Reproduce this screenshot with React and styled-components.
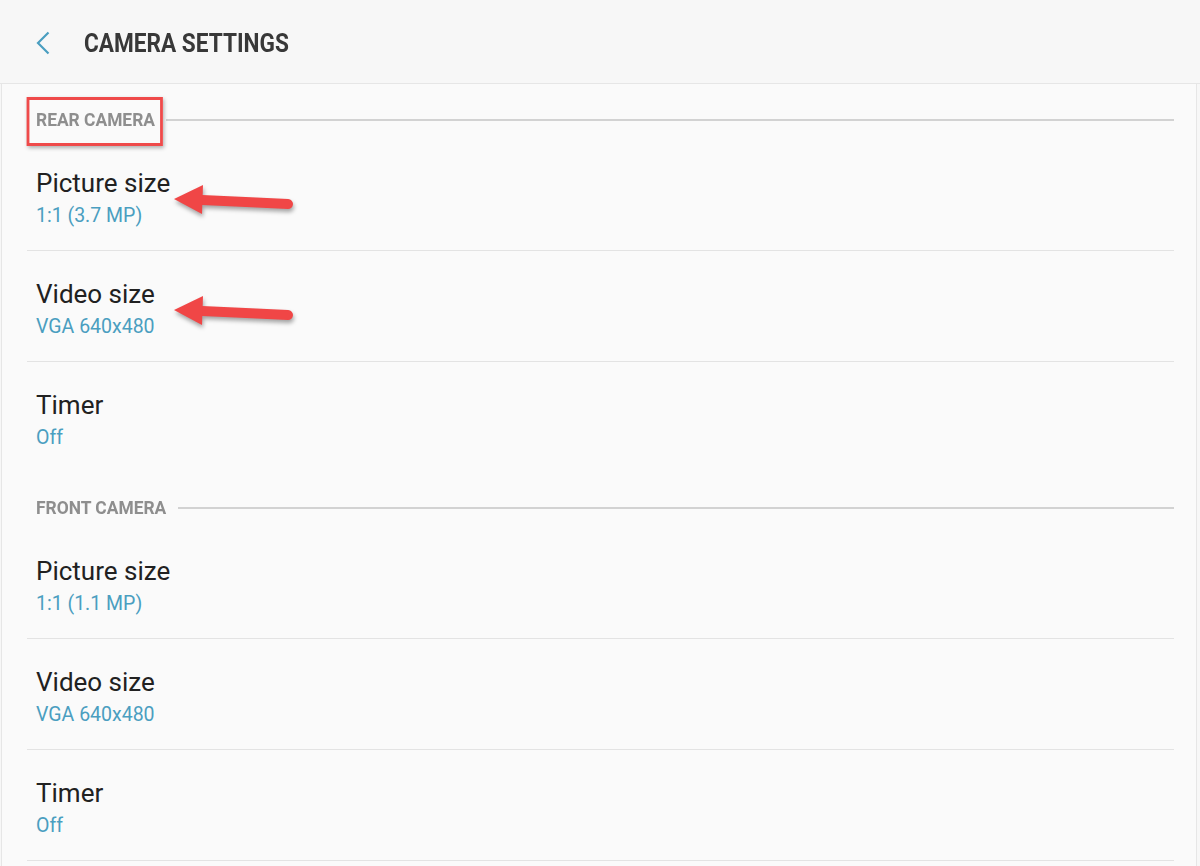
import React from "react";
import styled, { createGlobalStyle } from "styled-components";

const Global = createGlobalStyle`
  html, body { margin: 0; padding: 0; background: #f7f7f7; }
  body { font-family: Roboto, "Noto Sans", Arial, sans-serif; }
  * { box-sizing: border-box; }
`;

const Page = styled.div`
  width: 1200px;
  height: 866px;
  overflow: hidden;
  display: flex;
  flex-direction: column;
  background: #f7f7f7;
`;

const TopBar = styled.header`
  height: 84px;
  flex: none;
  display: flex;
  align-items: center;
  padding: 3px 0 0 33px;
  gap: 31px;
  border-bottom: 1px solid #e6e6e6;
`;

const BackButton = styled.button`
  width: 20px;
  height: 26px;
  padding: 0;
  border: 0;
  background: none;
  display: flex;
  align-items: center;
  justify-content: center;
  margin-top: -1px;
`;

const Title = styled.h1`
  margin: 0;
  font-size: 26px;
  font-weight: 700;
  color: #383838;
  transform: scaleX(0.87);
  transform-origin: left center;
  white-space: nowrap;
`;

const Panel = styled.main`
  flex: 1;
  margin: 0 3px 0 1px;
  background: #fafafa;
  border-left: 1px solid #e6e6e6;
  border-right: 1px solid #e6e6e6;
  padding: 0 22px 0 25px;
  display: flex;
  flex-direction: column;
`;

const SectionHead = styled.div`
  height: 56px;
  flex: none;
  display: flex;
  align-items: center;
  padding: ${(p) => (p.first ? 15 : 16)}px 0 0 9px;
  gap: 8px;
`;

const SectionLabel = styled.span`
  position: relative;
  font-size: 18.5px;
  font-weight: 700;
  color: #8e8e8e;
  line-height: 20px;
  white-space: nowrap;
  display: inline-block;
  transform: scaleX(0.94);
  transform-origin: left center;
  margin-right: -5px;
`;

const Highlight = styled.span`
  position: absolute;
  left: -10px;
  top: -13px;
  right: -8px;
  bottom: -16px;
  border: 3px solid #ef4a4a;
  box-shadow: 1px 2px 4px rgba(0, 0, 0, 0.3);
  pointer-events: none;
`;

const SectionLine = styled.div`
  flex: 1;
  height: 2px;
  background: #d2d2d2;
`;

const Row = styled.div`
  position: relative;
  height: ${(p) => (p.last ? 110 : 111)}px;
  padding: 28px 0 0 9px;
  border-bottom: ${(p) => (p.last ? "none" : "1px solid #e3e3e3")};
  flex: none;
`;

const RowTitle = styled.div`
  font-size: 26px;
  line-height: 30px;
  color: #212121;
`;

const RowValue = styled.div`
  margin-top: 6px;
  font-size: 19.5px;
  line-height: 24px;
  color: #4a9ec0;
`;

const ArrowSvg = styled.svg`
  position: absolute;
  left: 143px;
  top: 40px;
  overflow: visible;
  filter: drop-shadow(1px 3px 2px rgba(0, 0, 0, 0.35));
`;

function Arrow() {
  return (
    <ArrowSvg width="130" height="45" viewBox="0 0 130 45">
      <line x1="32" y1="20" x2="118" y2="24" stroke="#f04646" strokeWidth="10" strokeLinecap="round" />
      <polygon points="4,19 33,5 32,34" fill="#f04646" />
    </ArrowSvg>
  );
}

const sections = [
  {
    label: "REAR CAMERA",
    highlight: true,
    rows: [
      { title: "Picture size", value: "1:1 (3.7 MP)", arrow: true },
      { title: "Video size", value: "VGA 640x480", arrow: true },
      { title: "Timer", value: "Off", last: true },
    ],
  },
  {
    label: "FRONT CAMERA",
    rows: [
      { title: "Picture size", value: "1:1 (1.1 MP)" },
      { title: "Video size", value: "VGA 640x480" },
      { title: "Timer", value: "Off" },
    ],
  },
];

export default function App() {
  return (
    <Page>
      <Global />
      <TopBar>
        <BackButton aria-label="Back">
          <svg width="14" height="24" viewBox="0 0 14 24">
            <polyline points="12.5,1.5 2,12 12.5,22.5" fill="none" stroke="#4a9ec0" strokeWidth="2.2" />
          </svg>
        </BackButton>
        <Title>CAMERA SETTINGS</Title>
      </TopBar>
      <Panel>
        {sections.map((s, i) => (
          <React.Fragment key={s.label}>
            <SectionHead first={i === 0}>
              <SectionLabel>
                {s.label}
                {s.highlight && <Highlight />}
              </SectionLabel>
              <SectionLine />
            </SectionHead>
            {s.rows.map((r) => (
              <Row key={r.title} last={r.last}>
                <RowTitle>{r.title}</RowTitle>
                <RowValue>{r.value}</RowValue>
                {r.arrow && <Arrow />}
              </Row>
            ))}
          </React.Fragment>
        ))}
      </Panel>
    </Page>
  );
}
